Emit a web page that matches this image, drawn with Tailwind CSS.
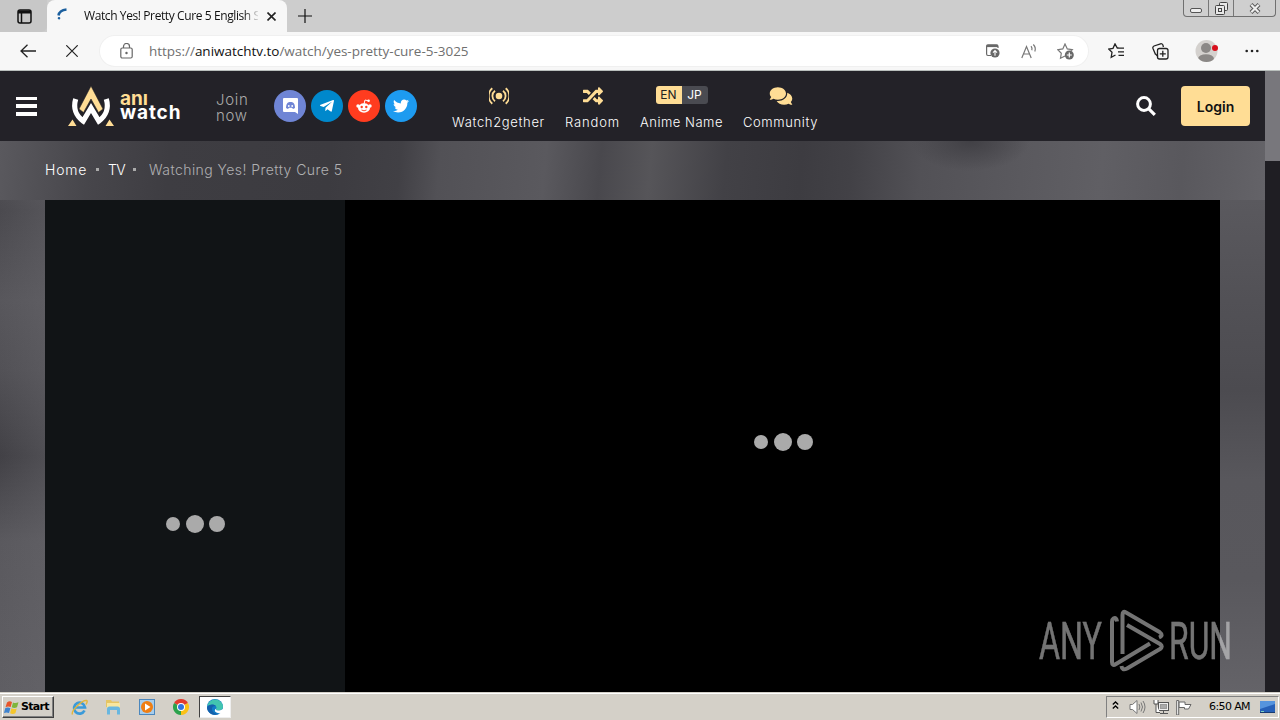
<!DOCTYPE html>
<html lang="en">
<head>
<meta charset="utf-8">
<title>Watch Yes! Pretty Cure 5</title>
<script src="https://cdn.jsdelivr.net/npm/@tailwindcss/browser@4"></script>
</head>
<body class="w-[1280px] h-[720px] overflow-hidden flex flex-col relative bg-[#1f1e23] whitespace-nowrap">

<!-- Tab strip -->
<div class="h-8 shrink-0 bg-[#cdcdcd] flex font-['Open_Sans',sans-serif]">
  <div class="w-[47px] rounded-br-md bg-[#c7c7c7] flex items-center pl-[17px]">
    <svg class="w-[15px] h-[15px]" viewBox="0 0 15 15" fill="none" stroke="#111" stroke-width="1.5"><rect x="1" y="1" width="13" height="13" rx="2"/><path d="M1 3h13" stroke-width="3"/><path d="M4.500 4v10"/></svg>
  </div>
  <div class="w-[240px] bg-[#f7f7f7] rounded-t-lg flex items-center">
    <svg class="ml-[10px] w-3 h-3 shrink-0 -mt-1" viewBox="0 0 12 12" fill="none" stroke="#1b5f9e" stroke-width="2.500"><path d="M1.500 7.500C2 4.500 4.500 2 9.500 1.500"/><circle cx="2" cy="10.200" r=".6" stroke-width="1.400"/></svg>
    <div class="ml-[15px] w-[174px] overflow-hidden text-[12px] leading-8 text-[#111] tracking-[-0.4px] [mask-image:linear-gradient(90deg,#000_160px,transparent_176px)]">Watch Yes! Pretty Cure 5 English S</div>
    <svg class="ml-[9px] w-[9px] h-[9px] shrink-0" viewBox="0 0 9 9" stroke="#222" stroke-width="1.600"><path d="M.5.5l8 8M8.500.5l-8 8"/></svg>
  </div>
  <div class="flex-1 flex items-center pl-[11px] bg-[#cdcdcd]">
    <svg class="w-[14px] h-[14px]" viewBox="0 0 14 14" stroke="#111" stroke-width="1.200"><path d="M7 0v14M0 7h14"/></svg>
  </div>
  <div class="w-[93px] h-[17px] mr-1 rounded-b-[4px] border border-t-0 border-[#707070] bg-[#cfcfcf] flex">
    <div class="w-[25px] border-r border-[#777] flex items-end justify-center pb-[3px]"><div class="w-[12px] h-[5px] rounded-[2px] border border-[#555] bg-[#eee]"></div></div>
    <div class="w-[25px] border-r border-[#777] flex items-center justify-center">
      <svg class="w-[13px] h-[13px]" viewBox="0 0 13 13" fill="#e8e8e8" stroke="#444"><rect x="4.500" y=".5" width="8" height="8" rx="1"/><rect x=".5" y="3.500" width="9" height="9" rx="1"/><rect x="3.500" y="6.500" width="3" height="3"/></svg>
    </div>
    <div class="flex-1 flex items-center justify-center">
      <svg class="w-[12px] h-[11px]" viewBox="0 0 12 11"><path d="M2 1.500l8 8M10 1.500l-8 8" stroke="#555" stroke-width="4"/><path d="M2.300 1.800l7.400 7.400M9.700 1.800l-7.400 7.400" stroke="#eee" stroke-width="2.200"/></svg>
    </div>
  </div>
</div>

<!-- Toolbar -->
<div class="h-[39px] shrink-0 bg-[#f7f7f7] border-b border-[#b9bfbc] flex items-center font-['Open_Sans',sans-serif]">
  <svg class="ml-5 w-4 h-[14px]" viewBox="0 0 16 14" fill="none" stroke="#222" stroke-width="1.300"><path d="M16 7H1M7.500.7L1 7l6.500 6.300"/></svg>
  <svg class="ml-[30px] w-3 h-3" viewBox="0 0 12 12" stroke="#222" stroke-width="1.200"><path d="M.3.3l11.400 11.400M11.700.3L.3 11.700"/></svg>
  <div class="ml-[22px] w-[988px] h-[30px] rounded-full bg-white flex items-center shadow-[0_0_0_1px_#f0f0f0]">
    <svg class="ml-5 w-[13px] h-4" viewBox="0 0 13 16" fill="none" stroke="#666" stroke-width="1.200"><rect x=".8" y="5" width="11.400" height="10" rx="1.500"/><path d="M3.500 5V3.500a3 3 0 0 1 6 0V5"/><circle cx="6.500" cy="10" r=".6" fill="#666"/></svg>
    <div class="ml-4 w-[837px] text-[13.500px] text-[#707070] tracking-[-0.02px]">https://<span class="text-[#111]">aniwatchtv.to</span>/watch/yes-pretty-cure-5-3025</div>
    <svg class="w-[14px] h-[14px] shrink-0" viewBox="0 0 14 14" fill="none" stroke="#686868"><path d="M5 11.500H2A1.500 1.500 0 0 1 .6 10V2.200A1.500 1.500 0 0 1 2 .8h8.500A1.500 1.500 0 0 1 12 2.200V4" stroke-width="1.200"/><path d="M.6 2h11.400" stroke-width="2.200"/><circle cx="9" cy="9" r="4.600" fill="#686868" stroke="none"/><path d="M9 11.800V6.800M7 8.600l2-2 2 2" stroke="#fff" stroke-width="1.100"/></svg>
    <svg class="ml-[21px] w-4 h-[15px] shrink-0" viewBox="0 0 16 15" fill="none" stroke="#777" stroke-width="1.200"><path d="M.8 14L5.500 2.500 10.200 14M2.400 10h6.200"/><path d="M10 2.200q1.500 1.800.8 4M12.300.5q3 3 1.500 7"/></svg>
    <svg class="ml-5 w-[17px] h-[17px] shrink-0" viewBox="0 0 17 17" fill="none" stroke="#777" stroke-width="1.200"><path d="M8 13l-4.500 2.300.8-5L.8 6.700l5-.8L8 1l2.300 4.900 5 .8-1.500 1.500"/><circle cx="12.300" cy="12" r="4.500" fill="#686868" stroke="none"/><path d="M12.300 9.500v5M9.800 12h5" stroke="#fff"/></svg>
  </div>
  <svg class="ml-5 w-[17px] h-4" viewBox="0 0 17 16" fill="none" stroke="#222" stroke-width="1.300"><path d="M10.500 5H9.300L7 .9 5 5.300l-4.300.7L4 9.300l-.8 5L7.500 12M10.500 5.200H16M10 8.800h6M10.500 12.300H16"/></svg>
  <svg class="ml-[27px] w-[17px] h-[17px]" viewBox="0 0 17 17" fill="none" stroke="#222" stroke-width="1.300"><path d="M3.500 11.500L1 5.500A2 2 0 0 1 2 3L8.500.8a2 2 0 0 1 2.500 1.500L11.400 4M6 13.500L3.500 11"/><rect x="5.500" y="5.500" width="10.500" height="10.500" rx="2"/><path d="M10.800 7.800v6M7.800 10.800h6"/></svg>
  <svg class="ml-[26px] w-6 h-6" viewBox="0 0 24 24"><defs><clipPath id="av"><circle cx="11.500" cy="12" r="11"/></clipPath></defs><circle cx="11.500" cy="12" r="11" fill="#d4d1ce"/><g clip-path="url(#av)" fill="#8b8886"><circle cx="11" cy="9" r="5"/><ellipse cx="11" cy="20" rx="8" ry="4.800"/></g><circle cx="20" cy="9" r="3" fill="#d80f1c"/></svg>
  <svg class="ml-[26px] w-[14px] h-1" viewBox="0 0 14 4" fill="#222"><circle cx="1.700" cy="2" r="1.300"/><circle cx="7" cy="2" r="1.300"/><circle cx="12.300" cy="2" r="1.300"/></svg>
</div>

<!-- Viewport -->
<div class="h-[621px] shrink-0 flex">
  <div class="w-[1265px] flex flex-col bg-[linear-gradient(90deg,transparent,#69686d55_45px,transparent_46px),linear-gradient(180deg,#59585d_70px,#4b4a4f_140px,#58575c_230px,#525156_300px,#424146_385px,#5a595e_470px,#5f5e63)]">
    <header class="h-[70px] shrink-0 bg-[#232228] flex items-center font-[Inter,sans-serif]">
      <div class="ml-4 w-[21px] h-[19px] flex flex-col justify-between"><i class="h-[3.500px] bg-white"></i><i class="h-[3.500px] bg-white"></i><i class="h-[3.500px] bg-white"></i></div>
      <svg class="ml-[31px] w-[46px] h-10" viewBox="0 0 46 40">
        <path d="M7.700 13C5 22 8 30 15.200 35L23 22l7.800 13C38 30 41 22 38.300 13" fill="none" stroke="#fff" stroke-width="5.200"/>
        <path d="M23 0l12 23-4.500 3.500L23 13l-7.500 13.500L11 23z" fill="#ffdd95" stroke="#232228" stroke-width=".6"/>
        <path d="M4.500 33.500L0 40h8.500zM41.500 33.500L46 40h-8.500z" fill="#ffdd95"/>
      </svg>
      <div class="ml-[6px] w-[62px] pt-[1px] text-[19px] leading-[14px] font-bold"><div class="text-[#ffdd95] -mt-[2px] mb-[1px]">anı</div><div class="text-white tracking-[0.9px] -mt-px">watch</div></div>
      <div class="ml-[34px] w-[58px] pt-[3px] text-[15px] leading-4 font-light tracking-[0.7px] text-[#aaa]"><div>Join</div><div>now</div></div>
      <div class="flex gap-[5px]">
        <div class="size-8 rounded-full bg-[#6f85d5] flex items-center justify-center"><svg class="w-[15px] h-4" viewBox="0 0 15 16"><path d="M1 0h13a1 1 0 0 1 1 1v15l-3-2H1a1 1 0 0 1-1-1V1a1 1 0 0 1 1-1z" fill="#fff"/><path d="M3 10c0-3 1-5 2-5.500l1.500-.5h2l1.500.5c1 .5 2 2.500 2 5.500l-2 1-1-1.200H6L5 11z" fill="#6f85d5"/><circle cx="5.800" cy="8" r=".9" fill="#fff"/><circle cx="9.200" cy="8" r=".9" fill="#fff"/></svg></div>
        <div class="size-8 rounded-full bg-[#0088cc] flex items-center justify-center"><svg class="w-[14px] h-4" viewBox="0 0 448 512" fill="#fff"><path d="M446.700 98.600l-67.600 318.800c-5.100 22.500-18.400 28.100-37.300 17.500l-103-75.900-49.700 47.800c-5.500 5.500-10.100 10.100-20.700 10.100l7.400-104.900 190.900-172.500c8.300-7.400-1.800-11.500-12.900-4.100L117.800 284 16.200 252.200c-22.100-6.900-22.500-22.100 4.600-32.700L418.200 66.400c18.400-6.900 34.500 4.100 28.500 32.200z"/></svg></div>
        <div class="size-8 rounded-full bg-[#ff3c1f] flex items-center justify-center"><svg class="w-4 h-4" viewBox="0 0 16 16"><ellipse cx="8" cy="10" rx="6" ry="4.700" fill="#fff"/><circle cx="2" cy="8" r="1.700" fill="#fff"/><circle cx="14" cy="8" r="1.700" fill="#fff"/><path d="M8 6l1-4 3.200.8" stroke="#fff" fill="none"/><circle cx="12.600" cy="2.700" r="1.300" fill="#fff"/><circle cx="5.700" cy="9" r="1.200" fill="#ff3c1f"/><circle cx="10.300" cy="9" r="1.200" fill="#ff3c1f"/><path d="M5.500 12q2.500 1.600 5 0" stroke="#ff3c1f" fill="none" stroke-width=".9"/></svg></div>
        <div class="size-8 rounded-full bg-[#1d9bf0] flex items-center justify-center"><svg class="w-4 h-4" viewBox="0 0 512 512" fill="#fff"><path d="M459.370 151.716c.325 4.548.325 9.097.325 13.645 0 138.720-105.583 298.558-298.558 298.558-59.452 0-114.680-17.219-161.137-47.106 8.447.974 16.568 1.299 25.340 1.299 49.055 0 94.213-16.568 130.274-44.832-46.132-.975-84.792-31.188-98.112-72.772 6.498.974 12.995 1.624 19.818 1.624 9.421 0 18.843-1.300 27.614-3.573-48.081-9.747-84.143-51.980-84.143-102.985v-1.299c13.969 7.797 30.214 12.670 47.431 13.319-28.264-18.843-46.781-51.005-46.781-87.391 0-19.492 5.197-37.360 14.294-52.954 51.655 63.675 129.300 105.258 216.365 109.807-1.624-7.797-2.599-15.918-2.599-24.040 0-57.828 46.782-104.934 104.934-104.934 30.213 0 57.502 12.670 76.670 33.137 23.715-4.548 46.456-13.320 66.599-25.340-7.798 24.366-24.366 44.833-46.132 57.827 21.117-2.273 41.584-8.122 60.426-16.243-14.292 20.791-32.161 39.308-52.628 54.253z"/></svg></div>
      </div>
      <nav class="ml-[35px] h-full flex gap-5 text-[13px] leading-5 text-white font-light">
        <div class="w-[93px] pt-[15px] flex flex-col items-center">
          <svg class="w-5 h-5 shrink-0" viewBox="0 0 20 20" fill="none" stroke="#ffdd95" stroke-width="1.800"><circle cx="10" cy="10" r="3.300" fill="#ffdd95" stroke="none"/><path d="M6 4.800a6.500 6.500 0 0 0 0 10.400M14 4.800a6.500 6.500 0 0 1 0 10.400M3.300 2.300a10 10 0 0 0 0 15.400M16.700 2.300a10 10 0 0 1 0 15.400"/></svg>
          <div class="mt-[6px] tracking-[0.67px]">Watch2gether</div>
        </div>
        <div class="w-[55px] pt-[15px] flex flex-col items-center">
          <svg class="w-5 h-5 shrink-0" viewBox="0 0 512 512" fill="#ffdd95"><path d="M504.971 359.029c9.373 9.373 9.373 24.569 0 33.941l-80 79.984c-15.010 15.010-40.971 4.490-40.971-16.971V416h-58.785a12.004 12.004 0 0 1-8.773-3.812l-70.556-75.596 53.333-57.143L352 336h32v-39.981c0-21.438 25.943-31.998 40.971-16.971l80 79.981zM12 176h84l52.781 56.551 53.333-57.143-70.556-75.596A11.999 11.999 0 0 0 122.785 96H12c-6.627 0-12 5.373-12 12v56c0 6.627 5.373 12 12 12zm372 0v39.984c0 21.460 25.961 31.980 40.971 16.971l80-79.984c9.373-9.373 9.373-24.569 0-33.941l-80-79.981C409.943 24.021 384 34.582 384 56.019V96h-58.785a12.004 12.004 0 0 0-8.773 3.812L96 336H12c-6.627 0-12 5.373-12 12v56c0 6.627 5.373 12 12 12h110.785c3.326 0 6.503-1.381 8.773-3.812L352 176h32z"/></svg>
          <div class="mt-[6px] tracking-[0.85px]">Random</div>
        </div>
        <div class="w-[83px] pt-[15px] flex flex-col items-center">
          <div class="h-[18px] w-[52px] rounded-[3px] overflow-hidden flex text-[12px] leading-[18px] font-normal text-center"><span class="w-[26px] bg-[#ffdd95] text-[#222]">EN</span><span class="w-[26px] bg-[#4a4b51]">JP</span></div>
          <div class="mt-2 tracking-[0.5px]">Anime Name</div>
        </div>
        <div class="w-[75px] pt-[15px] flex flex-col items-center">
          <svg class="w-6 h-5 shrink-0" viewBox="0 0 576 512" fill="#ffdd95"><path d="M416 192c0-88.400-93.100-160-208-160S0 103.600 0 192c0 34.300 14.100 65.900 38 92-13.400 30.200-35.500 54.200-35.800 54.500-2.200 2.300-2.800 5.700-1.500 8.700S4.800 352 8 352c36.600 0 66.900-12.300 88.700-25 32.200 15.700 70.300 25 111.300 25 114.900 0 208-71.600 208-160zm122 220c23.900-26 38-57.700 38-92 0-66.900-53.500-124.200-129.300-148.100.9 6.600 1.300 13.300 1.300 20.100 0 105.900-107.700 192-240 192-10.800 0-21.300-.8-31.700-1.900C207.800 439.600 281.800 480 368 480c41 0 79.100-9.200 111.300-25 21.800 12.700 52.100 25 88.700 25 3.200 0 6.100-1.900 7.300-4.800 1.300-2.900.7-6.300-1.500-8.700-.3-.3-22.400-24.200-35.800-54.500z"/></svg>
          <div class="mt-[6px] tracking-[0.6px]">Community</div>
        </div>
      </nav>
      <svg class="ml-auto w-5 h-5" viewBox="0 0 20 20" fill="none" stroke="#fff"><circle cx="8" cy="8" r="6.400" stroke-width="3"/><path d="M12.800 12.800l6 6" stroke-width="3.200"/></svg>
      <div class="ml-[25px] mr-[15px] w-[69px] h-10 rounded-[4px] bg-[#ffdd95] flex items-center justify-center text-[14px] font-semibold text-[#111] pt-px">Login</div>
    </header>
    <div class="h-[59px] shrink-0 flex items-center pb-[2px] pl-[45px] text-[14px] font-[Inter,sans-serif] font-light text-white bg-[radial-gradient(ellipse_60px_30px_at_970px_0px,#414045,transparent),linear-gradient(95deg,#5a595e_0px,#47464b_90px,#3e3d42_170px,#3c3b40_330px,#414045_400px,#525156_440px,#5a595e_545px,#49484d_600px,#565559_650px,#424146_725px,#3d3c41_800px,#424146_850px,#525156_920px,#5a595e_1020px,#605f64_1100px,#59585d_1180px,#646368)]">
      <span class="w-[51px] tracking-[0.8px]">Home</span><i class="size-[3px] bg-[#aaa]"></i><span class="ml-[9px] w-[25px] tracking-[-0.6px]">TV</span><i class="size-[3px] bg-[#aaa]"></i><span class="ml-[13px] text-[#b0b0b2] tracking-[0.45px]">Watching Yes! Pretty Cure 5</span>
    </div>
    <div class="flex h-[492px]">
      <div class="w-[45px]"></div>
      <div class="w-[300px] bg-[#111416] pt-[315px] pl-[121px] flex gap-[5.500px]">
        <i class="size-[14px] mt-[2px] rounded-full bg-[#aaa]"></i><i class="size-[18px] rounded-full bg-[#aaa]"></i><i class="size-4 mt-px rounded-full bg-[#aaa]"></i>
      </div>
      <div class="w-[875px] bg-black pt-[233px] pl-[409px] flex gap-[5.500px]">
        <i class="size-[14px] mt-[2px] rounded-full bg-[#aaa]"></i><i class="size-[18px] rounded-full bg-[#aaa]"></i><i class="size-4 mt-px rounded-full bg-[#aaa]"></i>
      </div>
      <div class="w-[45px] bg-[linear-gradient(180deg,#5a595e,#525156_100px,#4c4b50_190px,#58575c_280px,#59585d_380px,#646368)]"></div>
    </div>
  </div>
  <div class="w-[15px] bg-[#1f1e23]"><div class="h-[90px] bg-[#78777c]"></div></div>
</div>

<!-- Watermark -->
<svg class="absolute left-[1030px] top-[600px] w-[210px] h-20 opacity-50" viewBox="0 0 210 80" fill="#e8e8e8" stroke="#e8e8e8" stroke-width=".5" font-family="Roboto, sans-serif" font-size="52">
  <text x="9" y="59" textLength="63" lengthAdjust="spacingAndGlyphs">ANY</text>
  <text x="139" y="59" textLength="63" lengthAdjust="spacingAndGlyphs">RUN</text>
  <path fill="none" stroke-width="4" stroke-linejoin="round" d="M87 21.500Q86.500 17 83.500 18.500Q82 19.500 82 22V62Q82 66.500 86 64L120 43.500M92.500 54V15Q92.500 10.500 96 12.500L129.500 32Q134 35.500 129 37.500M97 25L130 44Q133.500 46.500 130 49L97 68.500Q92 71 91.500 66"/>
</svg>

<!-- Taskbar -->
<div class="h-7 shrink-0 bg-[#d4d0c8] border-t border-[#d4d0c8] shadow-[inset_0_1px_0_#fff] flex items-center pt-px font-['DejaVu_Sans',sans-serif] text-black">
  <div class="ml-[2px] w-[52px] h-[22px] border border-t-white border-l-white border-b-[#404040] border-r-[#404040] shadow-[inset_-1px_-1px_0_#808080] flex items-center pl-px">
    <svg class="w-[16px] h-[15px] shrink-0" viewBox="0 0 16 15"><path d="M3 2.500q2.500-2 5-.5L6.700 7Q4 5.800 1.500 7.200z" fill="#e8552b"/><path d="M9 2.500q2.500 1.200 5.500-.3L13 7.300q-2.700 1.300-5.300 0z" fill="#7fb53c"/><path d="M1.200 8.200q2.500-1.300 5.200 0L5 13q-2.400-1.200-5 0z" fill="#3f83cf"/><path d="M7.400 8.300q2.600 1.300 5.300.2L11.400 13.300q-2.600 1.300-5.300 0z" fill="#f5c62c"/></svg>
    <span class="text-[11px] font-bold tracking-[-0.7px] ml-px">Start</span>
  </div>
  <svg class="ml-[17px] w-[17px] h-[17px]" viewBox="0 0 17 17" fill="none"><path d="M13.500 11.500A5.500 5.500 0 1 1 14 8.500H4" stroke="#3a9ad9" stroke-width="2.700"/><path d="M1.500 15.500C-.5 12 11 1 15.500 1.500c1.500.5 0 3-.5 4" stroke="#e3b63a" stroke-width="1.400"/></svg>
  <svg class="ml-[17px] w-[16px] h-4" viewBox="0 0 16 16"><path d="M1 3V1h5l1 1.500h7V8H1z" fill="#e5c564"/><path d="M2 4h13v7H2z" fill="#f7e6a0"/><path d="M2 15.500V10q0-2.500 2.500-2.500h8Q15 7.500 15 10v5.500h-3V11H5v4.500z" fill="#69b7e0"/></svg>
  <svg class="ml-[18px] w-4 h-4" viewBox="0 0 16 16"><rect x=".5" y=".5" width="15" height="15" fill="#a7cdec" stroke="#4b87bd"/><circle cx="8" cy="8" r="6" fill="#ef7e13"/><path d="M6 4.500v7L11.500 8z" fill="#fff"/></svg>
  <svg class="ml-[18px] w-4 h-4" viewBox="0 0 16 16"><path d="M8 8L1.070 4A8 8 0 0 1 14.930 4z" fill="#e33b2e"/><path d="M8 8L14.930 4A8 8 0 0 1 8 16z" fill="#fbc116"/><path d="M8 8v8A8 8 0 0 1 1.070 4z" fill="#2ba24c"/><circle cx="8" cy="8" r="4" fill="#fff"/><circle cx="8" cy="8" r="3" fill="#3274e0"/></svg>
  <div class="ml-[10px] w-8 h-[22px] bg-white border border-t-[#404040] border-l-[#404040] border-b-[#eee] border-r-[#eee] flex items-center justify-center">
    <svg class="w-4 h-4" viewBox="0 0 16 16"><circle cx="8" cy="8" r="8" fill="#127cc8"/><path d="M.2 7A8 8 0 0 1 16 7.500c0 3-2.500 4-5 4-2-.2-2.500-1-1.500-2C10 6 5 4.500.2 7z" fill="#42c5b0"/><path d="M5 9c-.5 3 2 6 6.500 6C7 17.500 0 14 0 8.500 1.500 5 7 4.500 9 7 6.800 6.800 5.300 7.500 5 9z" fill="#1460ab"/><path d="M9.500 9.500c-1 1-.5 2 1.500 2 1.500 0 3-.2 5-1.500v3c-1 1-3 1.500-5 1-3-.5-4.500-3-1.500-4.500z" fill="#fff"/></svg>
  </div>
  <div class="ml-auto mr-px w-[173px] h-[22px] border border-t-[#808080] border-l-[#808080] border-b-white border-r-white flex items-center">
    <svg class="ml-[5px] w-[7px] h-2 -mt-1" viewBox="0 0 7 8" fill="none" stroke="#000" stroke-width="1.300"><path d="M.8 3.500l2.700-2.500 2.700 2.500M.8 7.500L3.500 5l2.700 2.500"/></svg>
    <svg class="ml-[10px] w-[17px] h-4" viewBox="0 0 17 16" fill="none" stroke="#777"><path d="M1 5.500h2.500L8 1.500v13l-4.500-4H1z" fill="#fff"/><path d="M10 5q1.700 3 0 6M12 3.500q3 4.500 0 9M14 2q4 6 0 12"/></svg>
    <svg class="ml-[7px] w-4 h-4" viewBox="0 0 16 16" fill="#eee" stroke="#555"><rect x="5.500" y="3.500" width="10" height="8"/><rect x="7.500" y="5.500" width="6" height="4" fill="#aaa" stroke="#999"/><path d="M7 14.500h8M10.500 12v2"/><path d="M1 1v4h4V1M3 5v8.500h4" fill="#fff"/></svg>
    <svg class="ml-[7px] w-[17px] h-[15px]" viewBox="0 0 17 15" fill="#fff" stroke="#666"><path d="M3 2h6v2.500h6L12.500 9H8.500V7.500H3z"/><path d="M.7.5h2V15h-2z"/></svg>
    <span class="ml-[16px] w-[51px] text-[11px] tracking-[-0.6px]">6:50 AM</span>
    <svg class="w-[15px] h-3 shrink-0" viewBox="0 0 15 12"><rect width="15" height="11" fill="#2660b8"/><path d="M0 0h15v3L0 8z" fill="#5594de"/><path d="M0 11h15v1H0z" fill="#173a70"/><path d="M1 10.500h3" stroke="#7fd1c0"/></svg>
  </div>
</div>
</body>
</html>
